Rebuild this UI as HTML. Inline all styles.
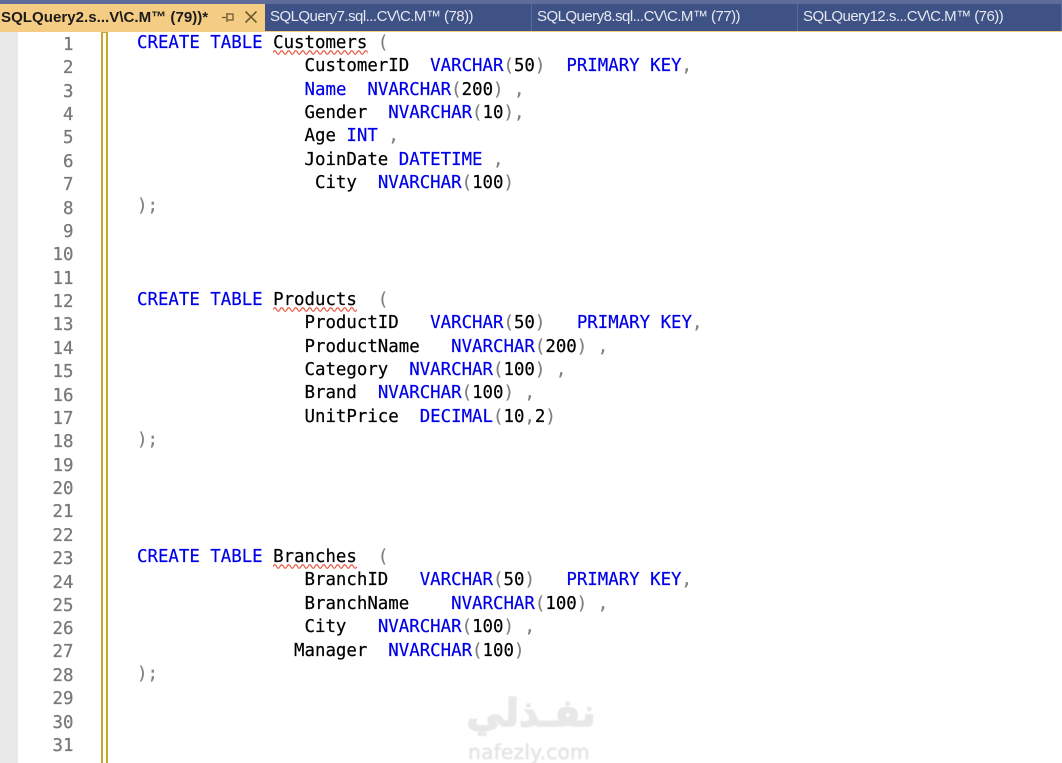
<!DOCTYPE html>
<html><head><meta charset="utf-8"><style>
html,body{margin:0;padding:0;background:#fff}
#r{position:relative;width:1062px;height:763px;overflow:hidden;background:#fff}
.a{position:absolute}
.l{position:absolute;left:137px;font:17.4px/23px "DejaVu Sans Mono",monospace;white-space:pre;color:#000;height:24px;-webkit-text-stroke:.2px currentColor}
.n{position:absolute;left:30px;width:43.5px;text-align:right;font:17.4px/23px "DejaVu Sans Mono",monospace;color:#787878;-webkit-text-stroke:.25px #787878}
b{font-weight:normal;color:#0000e8}
i{font-style:normal;color:#808080}
.t{position:absolute;top:4px;height:27px;background:#3f5285;color:#e6e9f2;font:15px/26px "Liberation Sans",sans-serif;letter-spacing:-.53px;white-space:nowrap;box-sizing:border-box;padding-left:5px;border-right:1px solid #5a6b9b}
</style></head><body><div id="r">
<div class="a" style="left:0;top:0;width:1062px;height:4px;background:#5d6c9b"></div>
<div class="a" style="left:0;top:30px;width:1062px;height:2px;background:#f5cc84"></div>
<div class="a" style="left:0;top:4px;width:265px;height:28px;background:#f5cc84;color:#1c1c1c;font:bold 15.1px/28px 'Liberation Sans',sans-serif;white-space:nowrap;padding-left:1px;box-sizing:border-box">SQLQuery2.s...V\C.M™ (79))*</div>
<svg class="a" style="left:220px;top:9px" width="40" height="16" viewBox="0 0 40 16" fill="none" stroke="#6b5a30" stroke-width="1.3"><path d="M2 8.500h5M7 4v9M7 5h6v6H7"/><path d="M25.500 2.500l11 11M36.500 2.500l-11 11" stroke-width="1.6"/></svg>
<div class="t" style="left:265px;width:267px">SQLQuery7.sql...CV\C.M™ (78))</div>
<div class="t" style="left:532px;width:266px">SQLQuery8.sql...CV\C.M™ (77))</div>
<div class="t" style="left:798px;width:264px">SQLQuery12.s...CV\C.M™ (76))</div>
<div class="a" style="left:0;top:32px;width:18px;height:731px;background:#e8e8e9"></div>
<div class="a" style="left:101px;top:32px;width:7px;height:731px;box-sizing:border-box;border-left:2px solid #c4a832;border-right:2px solid #c4a832;border-top:1px solid #c4a832;background:#fffef5"></div>
<div class="a" style="left:464px;top:688px;width:134px;height:50px;color:#e8e8e8;font:bold 38px/50px 'DejaVu Sans',sans-serif;text-align:center;-webkit-text-stroke:1.5px #e8e8e8;filter:blur(.6px)" dir="rtl">نفـذلي</div>
<div class="a" style="left:462px;top:740px;width:134px;color:#e4e4e4;font:20px/24px 'DejaVu Sans',sans-serif;text-align:center;letter-spacing:.3px;-webkit-text-stroke:.5px #e4e4e4;filter:blur(.4px)">nafezly.com</div>
<div class="n" style="top:34px">1</div><div class="n" style="top:57px">2</div><div class="n" style="top:81px">3</div><div class="n" style="top:104px">4</div><div class="n" style="top:127px">5</div><div class="n" style="top:151px">6</div><div class="n" style="top:174px">7</div><div class="n" style="top:198px">8</div><div class="n" style="top:221px">9</div><div class="n" style="top:244px">10</div><div class="n" style="top:268px">11</div><div class="n" style="top:291px">12</div><div class="n" style="top:314px">13</div><div class="n" style="top:338px">14</div><div class="n" style="top:361px">15</div><div class="n" style="top:385px">16</div><div class="n" style="top:408px">17</div><div class="n" style="top:431px">18</div><div class="n" style="top:455px">19</div><div class="n" style="top:478px">20</div><div class="n" style="top:501px">21</div><div class="n" style="top:525px">22</div><div class="n" style="top:548px">23</div><div class="n" style="top:572px">24</div><div class="n" style="top:595px">25</div><div class="n" style="top:618px">26</div><div class="n" style="top:641px">27</div><div class="n" style="top:665px">28</div><div class="n" style="top:688px">29</div><div class="n" style="top:712px">30</div><div class="n" style="top:735px">31</div>
<div class="l" style="top:32px"><b>CREATE TABLE</b> Customers <i>(</i></div>
<div class="l" style="top:55px">                CustomerID  <b>VARCHAR</b><i>(</i>50<i>)</i>  <b>PRIMARY KEY</b><i>,</i></div>
<div class="l" style="top:79px">                <b>Name</b>  <b>NVARCHAR</b><i>(</i>200<i>)</i> <i>,</i></div>
<div class="l" style="top:102px">                Gender  <b>NVARCHAR</b><i>(</i>10<i>),</i></div>
<div class="l" style="top:125px">                Age <b>INT</b> <i>,</i></div>
<div class="l" style="top:149px">                JoinDate <b>DATETIME</b> <i>,</i></div>
<div class="l" style="top:172px">                 City  <b>NVARCHAR</b><i>(</i>100<i>)</i></div>
<div class="l" style="top:195px"><i>);</i></div>
<div class="l" style="top:289px"><b>CREATE TABLE</b> Products  <i>(</i></div>
<div class="l" style="top:312px">                ProductID   <b>VARCHAR</b><i>(</i>50<i>)</i>   <b>PRIMARY KEY</b><i>,</i></div>
<div class="l" style="top:336px">                ProductName   <b>NVARCHAR</b><i>(</i>200<i>)</i> <i>,</i></div>
<div class="l" style="top:359px">                Category  <b>NVARCHAR</b><i>(</i>100<i>)</i> <i>,</i></div>
<div class="l" style="top:382px">                Brand  <b>NVARCHAR</b><i>(</i>100<i>)</i> <i>,</i></div>
<div class="l" style="top:406px">                UnitPrice  <b>DECIMAL</b><i>(</i>10<i>,</i>2<i>)</i></div>
<div class="l" style="top:429px"><i>);</i></div>
<div class="l" style="top:546px"><b>CREATE TABLE</b> Branches  <i>(</i></div>
<div class="l" style="top:569px">                BranchID   <b>VARCHAR</b><i>(</i>50<i>)</i>   <b>PRIMARY KEY</b><i>,</i></div>
<div class="l" style="top:593px">                BranchName    <b>NVARCHAR</b><i>(</i>100<i>)</i> <i>,</i></div>
<div class="l" style="top:616px">                City   <b>NVARCHAR</b><i>(</i>100<i>)</i> <i>,</i></div>
<div class="l" style="top:640px">               Manager  <b>NVARCHAR</b><i>(</i>100<i>)</i></div>
<div class="l" style="top:663px"><i>);</i></div>
<svg class="a" style="left:273px;top:50px" width="95" height="5" fill="none" stroke="#ea5a48" stroke-width="1.2"><path d="M0 2.500q1.750-3.500 3.500 0t3.500 0 3.500 0 3.500 0 3.500 0 3.500 0 3.500 0 3.500 0 3.500 0 3.500 0 3.500 0 3.500 0 3.500 0 3.500 0 3.500 0 3.500 0 3.500 0 3.500 0 3.500 0 3.500 0 3.500 0 3.500 0 3.500 0 3.500 0 3.500 0 3.500 0 3.500 0"/></svg>
<svg class="a" style="left:273px;top:307px" width="84" height="5" fill="none" stroke="#ea5a48" stroke-width="1.2"><path d="M0 2.500q1.750-3.500 3.500 0t3.500 0 3.500 0 3.500 0 3.500 0 3.500 0 3.500 0 3.500 0 3.500 0 3.500 0 3.500 0 3.500 0 3.500 0 3.500 0 3.500 0 3.500 0 3.500 0 3.500 0 3.500 0 3.500 0 3.500 0 3.500 0 3.500 0 3.500 0"/></svg>
<svg class="a" style="left:273px;top:564px" width="84" height="5" fill="none" stroke="#ea5a48" stroke-width="1.2"><path d="M0 2.500q1.750-3.500 3.500 0t3.500 0 3.500 0 3.500 0 3.500 0 3.500 0 3.500 0 3.500 0 3.500 0 3.500 0 3.500 0 3.500 0 3.500 0 3.500 0 3.500 0 3.500 0 3.500 0 3.500 0 3.500 0 3.500 0 3.500 0 3.500 0 3.500 0 3.500 0"/></svg>
</div></body></html>
